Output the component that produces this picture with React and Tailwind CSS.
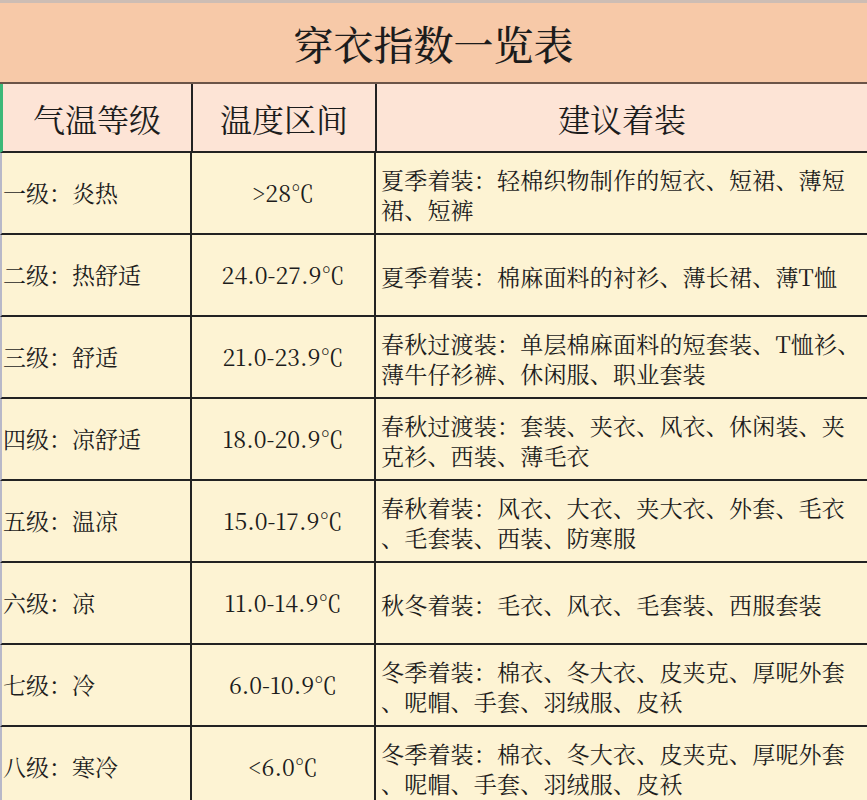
import React from "react";

const rows = [
  { level: "一级：炎热", temp: ">28℃", lines: ["夏季着装：轻棉织物制作的短衣、短裙、薄短", "裙、短裤"] },
  { level: "二级：热舒适", temp: "24.0-27.9℃", lines: ["夏季着装：棉麻面料的衬衫、薄长裙、薄T恤"] },
  { level: "三级：舒适", temp: "21.0-23.9℃", lines: ["春秋过渡装：单层棉麻面料的短套装、T恤衫、", "薄牛仔衫裤、休闲服、职业套装"] },
  { level: "四级：凉舒适", temp: "18.0-20.9℃", lines: ["春秋过渡装：套装、夹衣、风衣、休闲装、夹", "克衫、西装、薄毛衣"] },
  { level: "五级：温凉", temp: "15.0-17.9℃", lines: ["春秋着装：风衣、大衣、夹大衣、外套、毛衣", "、毛套装、西装、防寒服"] },
  { level: "六级：凉", temp: "11.0-14.9℃", lines: ["秋冬着装：毛衣、风衣、毛套装、西服套装"] },
  { level: "七级：冷", temp: "6.0-10.9℃", lines: ["冬季着装：棉衣、冬大衣、皮夹克、厚呢外套", "、呢帽、手套、羽绒服、皮袄"] },
  { level: "八级：寒冷", temp: "<6.0℃", lines: ["冬季着装：棉衣、冬大衣、皮夹克、厚呢外套", "、呢帽、手套、羽绒服、皮袄"] },
];

const font = { fontFamily: '"Noto Serif CJK SC", "Liberation Serif", "Noto Sans CJK SC", serif' };

export default function App() {
  return (
    <div className="w-[867px] h-[800px] overflow-hidden bg-[#fdf3d3] text-[#1c1c1c]" style={font}>
      <div className="h-[84px] bg-[#f7c9a8] border-t-[3px] border-[#cdbdb4] border-b-2 border-b-[#6b5448] flex items-center justify-center">
        <h1 className="text-[40px] leading-none font-medium">穿衣指数一览表</h1>
      </div>

      <div className="grid grid-cols-[190px_184px_1fr] h-[69px] bg-[#fde4d6] border-l-[3px] border-l-[#3cb878] border-b-2 border-b-[#222]">
        <div className="flex items-center justify-center text-[32px] border-r-2 border-[#222] -ml-[3px] pl-[3px]">气温等级</div>
        <div className="flex items-center justify-center text-[32px] border-r-2 border-[#222]">温度区间</div>
        <div className="flex items-center justify-center text-[32px]">建议着装</div>
      </div>

      {rows.map((r) => (
        <div key={r.level} className="grid grid-cols-[190px_184px_1fr] h-[82px] border-l-2 border-l-[#b8b8c8] border-b-2 border-b-[#222]">
          <div className="flex items-center pl-[3px] text-[23px] border-r-2 border-[#222] -ml-[2px]">{r.level}</div>
          <div className="flex items-center justify-center text-[23px] border-r-2 border-[#222]">{r.temp}</div>
          <div className="flex flex-col justify-center pl-[5px] pt-[4px] text-[23px] leading-[30px] tracking-[0.2px] whitespace-nowrap">
            {r.lines.map((l, i) => (
              <div key={i}>{l}</div>
            ))}
          </div>
        </div>
      ))}
    </div>
  );
}
